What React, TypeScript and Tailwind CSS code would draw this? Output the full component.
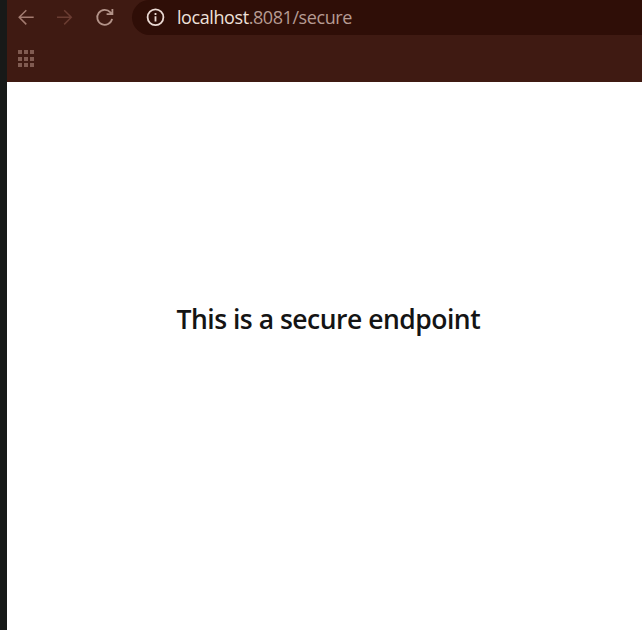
function BackIcon() {
  return (
    <svg className="h-[34px] w-[38px] text-[#a37b70]" viewBox="7 0 38 34" fill="none" stroke="currentColor" strokeWidth="1.5">
      <path d="M33.7 17.3H19.5M26.3 10.2l-7.1 7.1 7.1 7.1" />
    </svg>
  );
}

function ForwardIcon() {
  return (
    <svg className="h-[34px] w-[40px] text-[#6a3c32]" viewBox="45 0 40 34" fill="none" stroke="currentColor" strokeWidth="1.5">
      <path d="M57 17.3h14M64.2 10.2l7.1 7.1-7.1 7.1" />
    </svg>
  );
}

function ReloadIcon() {
  return (
    <svg className="h-[34px] w-[47px] text-[#b39389]" viewBox="85 0 47 34" fill="none" stroke="currentColor" strokeWidth="1.8">
      <path d="M112.1 18.9a7.5 7.5 0 1 1-1.7-6.5l1.6 1.7M112.4 9v5.2h-5.8" />
    </svg>
  );
}

function InfoIcon() {
  return (
    <svg className="mt-2 h-[19px] w-[19px] shrink-0 text-[#ead9d3]" viewBox="0 0 19 19" fill="none" stroke="currentColor" strokeWidth="1.8">
      <circle cx="9.5" cy="9.3" r="7.9" />
      <path d="M9.5 8.3v5.2M9.5 4.9v2" />
    </svg>
  );
}

const dots = Array.from({ length: 9 }, (_, i) => i);

export default function App() {
  return (
    <div className="flex h-[630px] w-[642px] overflow-hidden bg-white">
      <div className="w-[7px] shrink-0 bg-[#171918]" />
      <div className="flex min-w-0 grow flex-col">
        <header className="h-[82px] shrink-0 bg-[#3f1a12]">
          <div className="flex h-[35px]">
            <BackIcon />
            <ForwardIcon />
            <ReloadIcon />
            <div className="flex grow rounded-l-[18px] bg-[#2f0e07] pl-[13.5px]">
              <InfoIcon />
              <span className="ml-[12.5px] mt-[5px] whitespace-nowrap font-['Open_Sans','Noto_Sans',sans-serif] text-[18px] leading-6 tracking-[-0.42px] text-[#b69b93]">
                <span className="text-[#eee0da]">localhost</span>.8081/secure
              </span>
            </div>
          </div>
          <div className="ml-[11px] mt-[15px] grid w-4 grid-cols-3 gap-[2.5px]">
            {dots.map((dot) => (
              <span key={dot} className="size-[4px] bg-[#805b51]" />
            ))}
          </div>
        </header>
        <main className="grow pl-[169.5px] pt-[217px]">
          <h1 className="whitespace-nowrap font-['Open_Sans','Noto_Sans',sans-serif] text-[26.5px] font-semibold leading-10 tracking-[-0.5px] text-[#141414]">
            This is a secure endpoint
          </h1>
        </main>
      </div>
    </div>
  );
}
